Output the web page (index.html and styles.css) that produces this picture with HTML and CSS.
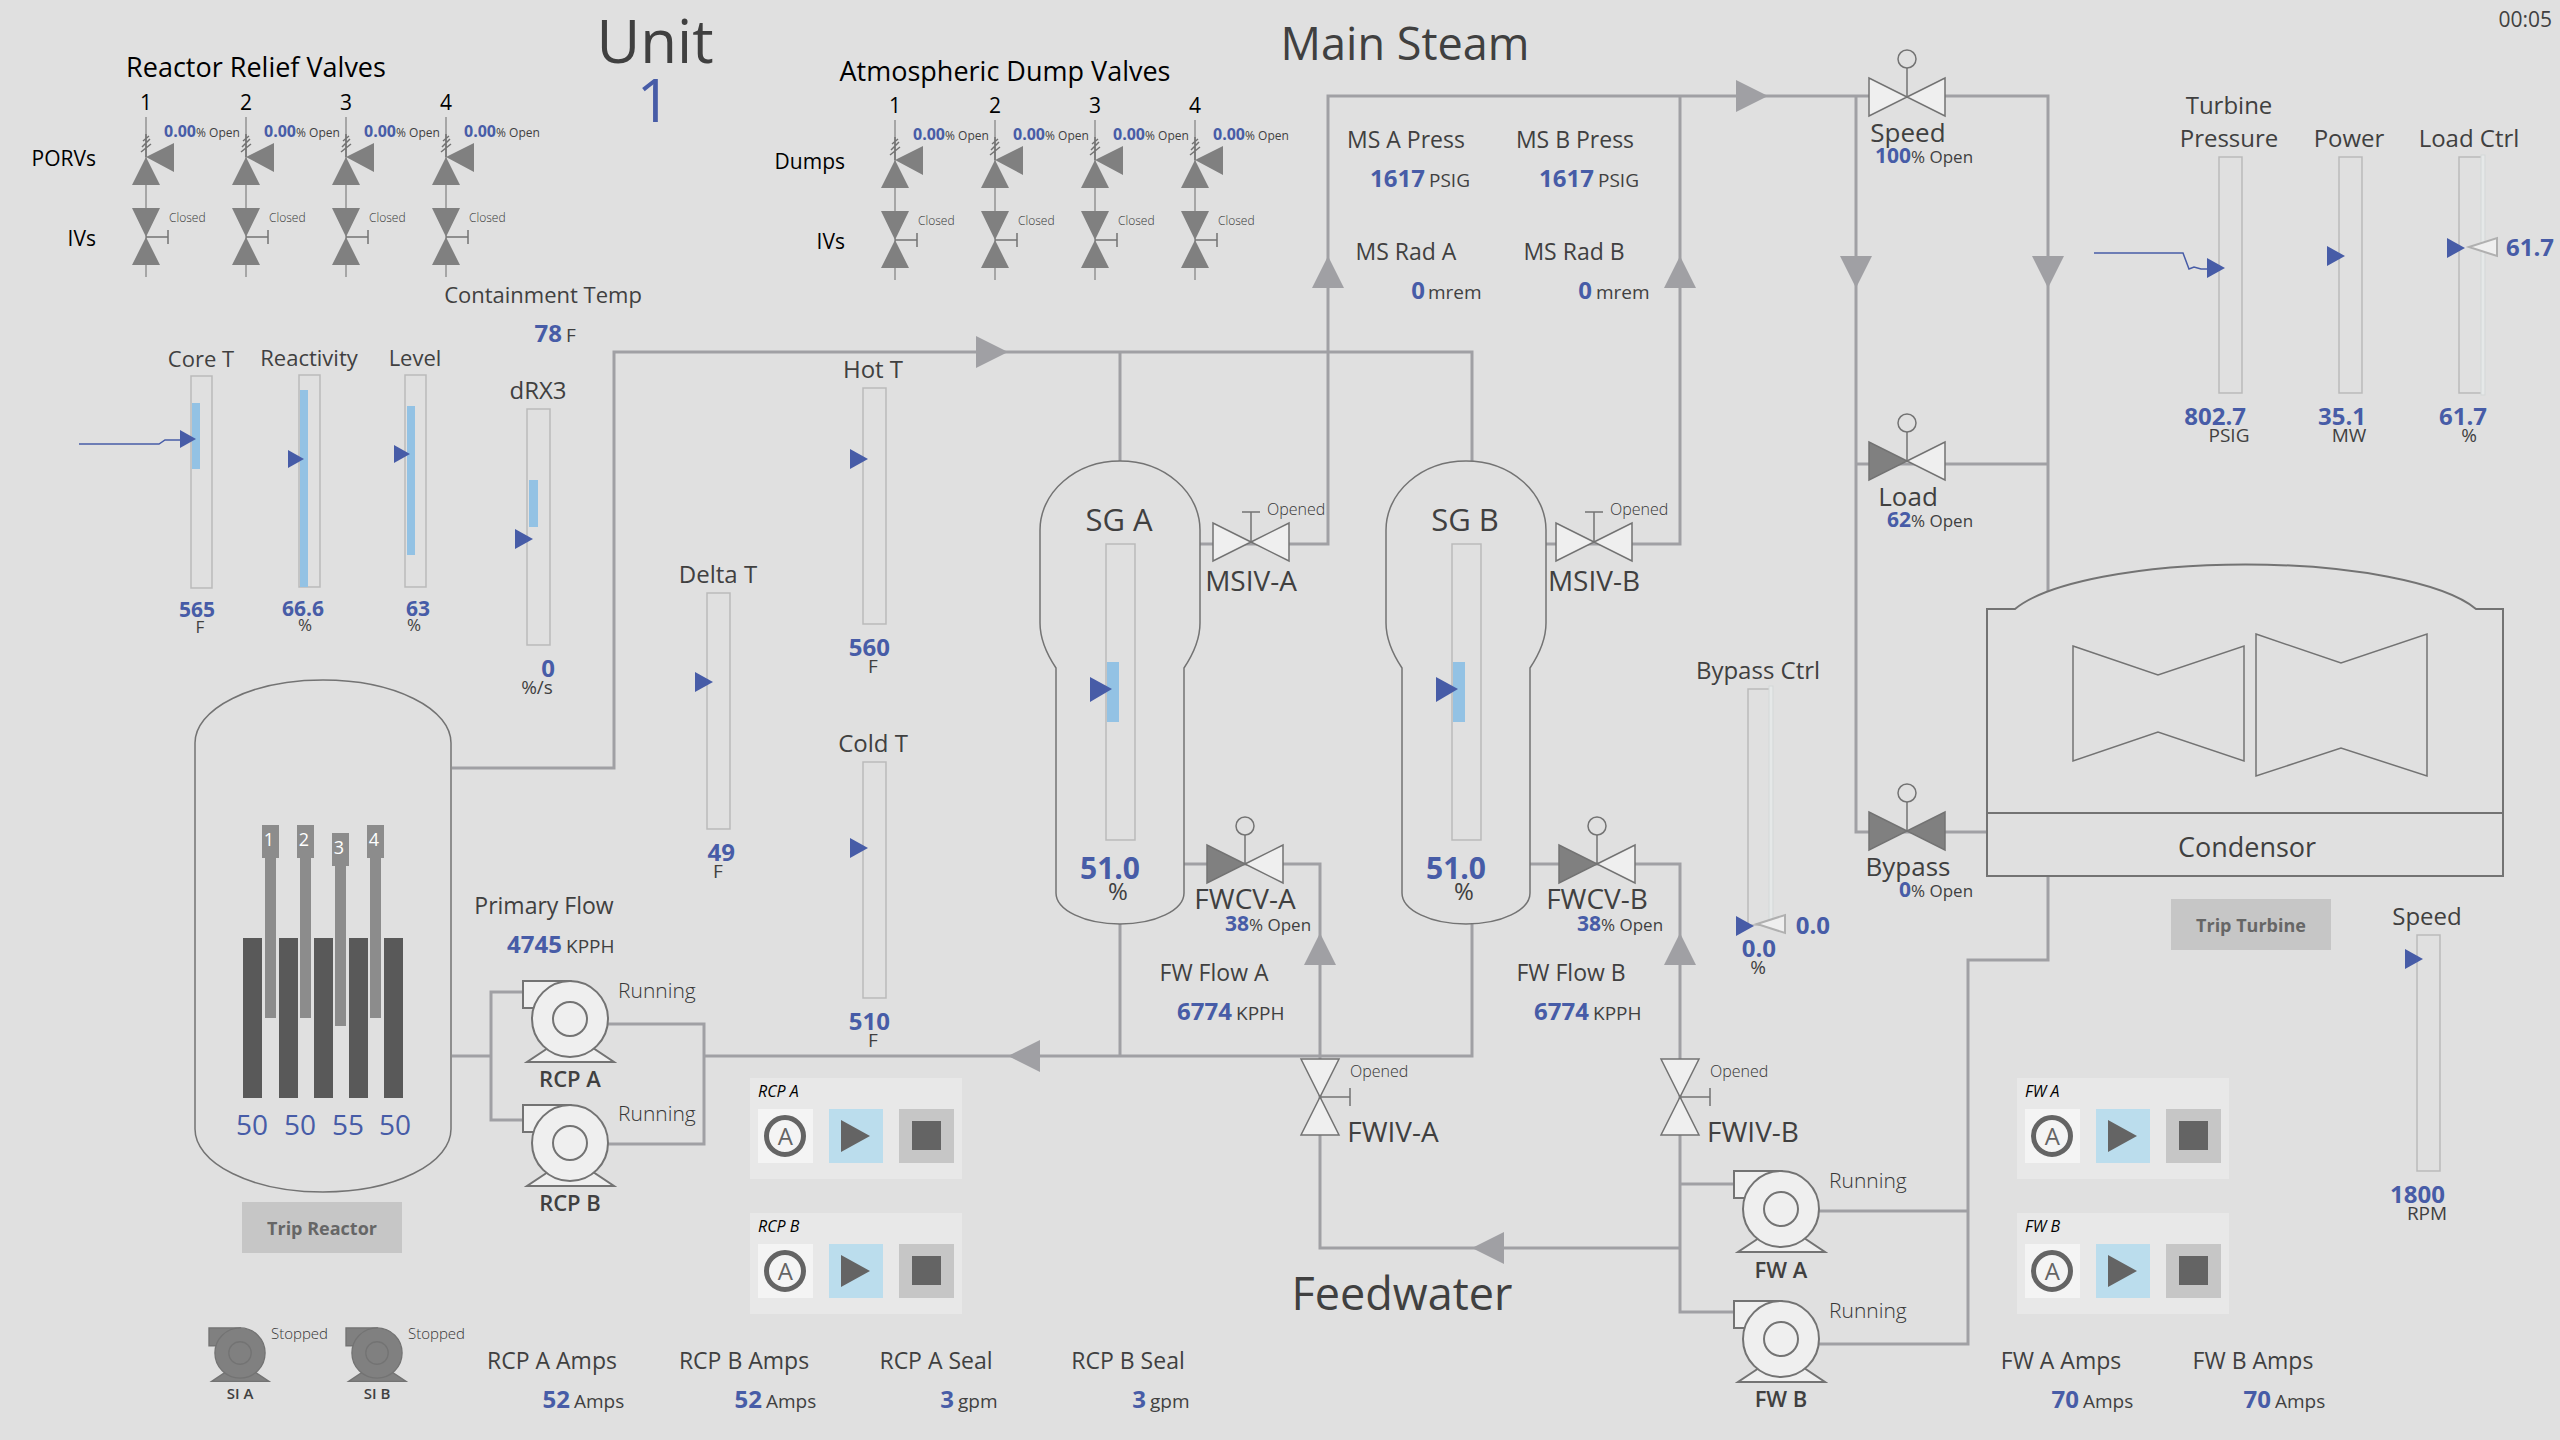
FILE: index.html
```html
<!DOCTYPE html>
<html lang="en">
<head>
<meta charset="utf-8">
<meta name="viewport" content="width=device-width, initial-scale=1">
<title>Unit 1 Overview</title>
<link rel="stylesheet" href="styles.css">
</head>
<body>
<main class="overview">
<svg class="mimic" viewBox="0 0 2560 1440" role="group" aria-label="Unit 1 plant mimic">
  <defs>
    <g id="pointer"><path d="M-12 -10 L6 0 L-12 10 Z"/></g>
    <g id="pointer-small"><path d="M-11 -9 L5 0 L-11 9 Z"/></g>
    <g id="setpoint"><path d="M1 0 L29 -9 V9 Z"/></g>
    <g id="arrow-right"><path d="M-16 -16 L16 0 L-16 16 Z"/></g>
    <g id="hand-stem"><path d="M0 0 V-30 M-9 -30 H9"/></g>
    <g id="control-stem"><path d="M0 0 V-29"/><circle cy="-38" r="9"/></g>
    <g id="relief-train">
      <path class="thin-pipe" d="M0 117 V277"/>
      <path class="spring" d="M0 134 V157 M-3 141 L3 136 M-4 147 L4 139 M-5 152 L5 144"/>
      <path class="shut" d="M0 157 L28 143 V172 Z M0 157 L-14 185 H14 Z"/>
      <path class="shut" d="M0 237 L-14 208 H14 Z M0 237 L-14 265 H14 Z"/>
      <path class="spring" d="M0 237 H22 M22 230 V244"/>
    </g>
    <g id="pump">
      <path d="M-22 29 L-43 43 H44 L23 29 Z"/>
      <path d="M0 -38 H-47 V-11 H-20 Z"/>
      <circle r="38"/>
      <circle r="17"/>
    </g>
    <g id="steam-generator">
      <path d="M1056 668 C1046 653 1040 638 1040 623 V530 A80 69 0 0 1 1200 530 V623 C1200 638 1194 653 1184 668 V893 A64 31 0 0 1 1056 893 Z"/>
    </g>
    <g id="rod"><path d="M262 825 H279 V858 H276 V1018 H265 V858 H262 Z"/></g>
  </defs>

  <!-- Process piping -->
  <g class="pipe">
    <path d="M452 768 H614 V352 H1472 V462"/>
    <path d="M1120 352 V462"/>
    <path d="M1200 544 H1328 V96 H1870"/>
    <path d="M1546 544 H1680 V96"/>
    <path d="M1945 96 H2048 V592"/>
    <path d="M1856 96 V832 H1987"/>
    <path d="M1856 464 H2048"/>
    <path d="M1184 864 H1320 V1248 H1680"/>
    <path d="M1530 864 H1680 V1312 H1734"/>
    <path d="M1680 1184 H1734"/>
    <path d="M1120 924 V1056 M1472 924 V1056 H704"/>
    <path d="M452 1056 H491 M522 992 H491 V1120 H522"/>
    <path d="M607 1024 H704 V1144 H607"/>
    <path d="M1818 1211 H1968 M1818 1344 H1968 V960 H2048 V876"/>
  </g>
  <g class="flow">
    <use href="#arrow-right" transform="translate(992 352)"/>
    <use href="#arrow-right" transform="translate(1752 96)"/>
    <use href="#arrow-right" transform="translate(1328 272) rotate(-90)"/>
    <use href="#arrow-right" transform="translate(1680 272) rotate(-90)"/>
    <use href="#arrow-right" transform="translate(1856 272) rotate(90)"/>
    <use href="#arrow-right" transform="translate(2048 272) rotate(90)"/>
    <use href="#arrow-right" transform="translate(1320 949) rotate(-90)"/>
    <use href="#arrow-right" transform="translate(1680 949) rotate(-90)"/>
    <use href="#arrow-right" transform="translate(1024 1056) rotate(180)"/>
    <use href="#arrow-right" transform="translate(1488 1248) rotate(180)"/>
  </g>

  <!-- Headings -->
  <text class="unit-title middle" x="655" y="63">Unit</text>
  <text class="unit-title accent middle" x="654" y="122">1</text>
  <text class="section middle" x="1405" y="60">Main Steam</text>
  <text class="section middle" x="1402" y="1310">Feedwater</text>
  <text class="clock end" x="2552" y="27">00:05</text>

  <!-- Reactor relief valves -->
  <g class="valve-bank">
    <text class="bank-title middle" x="256" y="77">Reactor Relief Valves</text>
    <text class="bank-label end" x="96" y="166">PORVs</text>
    <text class="bank-label end" x="96" y="246">IVs</text>
    <g transform="translate(146 0)">
      <use href="#relief-train"/>
      <text class="bank-label middle" y="110">1</text>
      <text class="opening-small" x="18" y="137"><tspan class="num">0.00</tspan>% Open</text>
      <text class="state-small" x="23" y="222">Closed</text>
    </g>
    <g transform="translate(246 0)">
      <use href="#relief-train"/>
      <text class="bank-label middle" y="110">2</text>
      <text class="opening-small" x="18" y="137"><tspan class="num">0.00</tspan>% Open</text>
      <text class="state-small" x="23" y="222">Closed</text>
    </g>
    <g transform="translate(346 0)">
      <use href="#relief-train"/>
      <text class="bank-label middle" y="110">3</text>
      <text class="opening-small" x="18" y="137"><tspan class="num">0.00</tspan>% Open</text>
      <text class="state-small" x="23" y="222">Closed</text>
    </g>
    <g transform="translate(446 0)">
      <use href="#relief-train"/>
      <text class="bank-label middle" y="110">4</text>
      <text class="opening-small" x="18" y="137"><tspan class="num">0.00</tspan>% Open</text>
      <text class="state-small" x="23" y="222">Closed</text>
    </g>
  </g>

  <!-- Atmospheric dump valves -->
  <g class="valve-bank" transform="translate(749 3)">
    <text class="bank-title middle" x="256" y="78">Atmospheric Dump Valves</text>
    <text class="bank-label end" x="96" y="166">Dumps</text>
    <text class="bank-label end" x="96" y="246">IVs</text>
    <g transform="translate(146 0)">
      <use href="#relief-train"/>
      <text class="bank-label middle" y="110">1</text>
      <text class="opening-small" x="18" y="137"><tspan class="num">0.00</tspan>% Open</text>
      <text class="state-small" x="23" y="222">Closed</text>
    </g>
    <g transform="translate(246 0)">
      <use href="#relief-train"/>
      <text class="bank-label middle" y="110">2</text>
      <text class="opening-small" x="18" y="137"><tspan class="num">0.00</tspan>% Open</text>
      <text class="state-small" x="23" y="222">Closed</text>
    </g>
    <g transform="translate(346 0)">
      <use href="#relief-train"/>
      <text class="bank-label middle" y="110">3</text>
      <text class="opening-small" x="18" y="137"><tspan class="num">0.00</tspan>% Open</text>
      <text class="state-small" x="23" y="222">Closed</text>
    </g>
    <g transform="translate(446 0)">
      <use href="#relief-train"/>
      <text class="bank-label middle" y="110">4</text>
      <text class="opening-small" x="18" y="137"><tspan class="num">0.00</tspan>% Open</text>
      <text class="state-small" x="23" y="222">Closed</text>
    </g>
  </g>

  <!-- Readouts: name centred on the origin, value and unit below -->
  <g class="readout long" transform="translate(543 303)"><text class="name">Containment Temp</text><text class="value" x="19" y="39">78</text><text class="uom" x="23" y="39">F</text></g>
  <g class="readout" transform="translate(1406 148)"><text class="name">MS A Press</text><text class="value" x="19" y="39">1617</text><text class="uom" x="23" y="39">PSIG</text></g>
  <g class="readout" transform="translate(1575 148)"><text class="name">MS B Press</text><text class="value" x="19" y="39">1617</text><text class="uom" x="23" y="39">PSIG</text></g>
  <g class="readout" transform="translate(1406 260)"><text class="name">MS Rad A</text><text class="value" x="19" y="39">0</text><text class="uom" x="22" y="39">mrem</text></g>
  <g class="readout" transform="translate(1574 260)"><text class="name">MS Rad B</text><text class="value" x="18" y="39">0</text><text class="uom" x="22" y="39">mrem</text></g>
  <g class="readout" transform="translate(544 914)"><text class="name">Primary Flow</text><text class="value" x="18" y="39">4745</text><text class="uom" x="22" y="39">KPPH</text></g>
  <g class="readout" transform="translate(1214 981)"><text class="name">FW Flow A</text><text class="value" x="18" y="39">6774</text><text class="uom" x="22" y="39">KPPH</text></g>
  <g class="readout" transform="translate(1571 981)"><text class="name">FW Flow B</text><text class="value" x="18" y="39">6774</text><text class="uom" x="22" y="39">KPPH</text></g>
  <g class="readout" transform="translate(552 1369)"><text class="name">RCP A Amps</text><text class="value" x="18" y="39">52</text><text class="uom" x="22" y="39">Amps</text></g>
  <g class="readout" transform="translate(744 1369)"><text class="name">RCP B Amps</text><text class="value" x="18" y="39">52</text><text class="uom" x="22" y="39">Amps</text></g>
  <g class="readout" transform="translate(936 1369)"><text class="name">RCP A Seal</text><text class="value" x="18" y="39">3</text><text class="uom" x="22" y="39">gpm</text></g>
  <g class="readout" transform="translate(1128 1369)"><text class="name">RCP B Seal</text><text class="value" x="18" y="39">3</text><text class="uom" x="22" y="39">gpm</text></g>
  <g class="readout" transform="translate(2061 1369)"><text class="name">FW A Amps</text><text class="value" x="18" y="39">70</text><text class="uom" x="22" y="39">Amps</text></g>
  <g class="readout" transform="translate(2253 1369)"><text class="name">FW B Amps</text><text class="value" x="18" y="39">70</text><text class="uom" x="22" y="39">Amps</text></g>

  <!-- Reactor gauges -->
  <g class="gauge compact" transform="translate(191 376)">
    <text class="name" x="10" y="-9">Core T</text>
    <rect class="track" width="21" height="212"/>
    <rect class="band" x="1" y="27" width="8" height="66"/>
    <path class="trend" d="M-112 68 H-32 L-26 64 H-11"/>
    <use class="pointer" href="#pointer-small" y="63"/>
    <text class="value" x="24" y="241">565</text>
    <text class="uom" x="9" y="257">F</text>
  </g>
  <g class="gauge compact" transform="translate(299 375)">
    <text class="name" x="10" y="-9">Reactivity</text>
    <rect class="track" width="21" height="212"/>
    <rect class="band" x="1" y="15" width="8" height="197"/>
    <use class="pointer" href="#pointer-small" y="84"/>
    <text class="value" x="25" y="241">66.6</text>
    <text class="uom" x="6" y="256">%</text>
  </g>
  <g class="gauge compact" transform="translate(405 375)">
    <text class="name" x="10" y="-9">Level</text>
    <rect class="track" width="21" height="212"/>
    <rect class="band" x="2" y="31" width="8" height="149"/>
    <use class="pointer" href="#pointer-small" y="79"/>
    <text class="value" x="25" y="241">63</text>
    <text class="uom" x="9" y="256">%</text>
  </g>
  <g class="gauge" transform="translate(527 409)">
    <text class="name" x="11" y="-10">dRX3</text>
    <rect class="track" width="23" height="236"/>
    <rect class="band" x="2" y="71" width="9" height="47"/>
    <use class="pointer" href="#pointer" y="130"/>
    <text class="value" x="28" y="268">0</text>
    <text class="uom" x="10" y="285">%/s</text>
  </g>
  <g class="gauge" transform="translate(863 388)">
    <text class="name" x="10" y="-10">Hot T</text>
    <rect class="track" width="23" height="236"/>
    <use class="pointer" href="#pointer" x="-1" y="71"/>
    <text class="value" x="27" y="268">560</text>
    <text class="uom" x="10" y="285">F</text>
  </g>
  <g class="gauge" transform="translate(707 593)">
    <text class="name" x="11" y="-10">Delta T</text>
    <rect class="track" width="23" height="236"/>
    <use class="pointer" href="#pointer" y="89"/>
    <text class="value" x="28" y="268">49</text>
    <text class="uom" x="11" y="285">F</text>
  </g>
  <g class="gauge" transform="translate(863 762)">
    <text class="name" x="10" y="-10">Cold T</text>
    <rect class="track" width="23" height="236"/>
    <use class="pointer" href="#pointer" x="-1" y="86"/>
    <text class="value" x="27" y="268">510</text>
    <text class="uom" x="10" y="285">F</text>
  </g>

  <!-- Turbine gauges -->
  <g class="gauge" transform="translate(2219 157)">
    <text class="name" x="10" y="-43">Turbine</text>
    <text class="name" x="10" y="-10">Pressure</text>
    <rect class="track" width="23" height="236"/>
    <path class="trend" d="M-125 96 H-36 L-30 112 L-25 110 L-18 112 H-12"/>
    <use class="pointer" href="#pointer" y="111"/>
    <text class="value" x="27" y="268">802.7</text>
    <text class="uom" x="10" y="285">PSIG</text>
  </g>
  <g class="gauge" transform="translate(2339 157)">
    <text class="name" x="10" y="-10">Power</text>
    <rect class="track" width="23" height="236"/>
    <use class="pointer" href="#pointer" y="99"/>
    <text class="value" x="27" y="268">35.1</text>
    <text class="uom" x="10" y="285">MW</text>
  </g>
  <g class="gauge" transform="translate(2459 157)">
    <text class="name" x="10" y="-10">Load Ctrl</text>
    <rect class="track" width="23" height="236"/>
    <rect class="slider" x="22" y="-2" width="4" height="240"/>
    <use class="pointer" href="#pointer" y="91"/>
    <use class="setpoint" href="#setpoint" x="9" y="90"/>
    <text class="value" x="95" y="99">61.7</text>
    <text class="value" x="28" y="268">61.7</text>
    <text class="uom" x="10" y="285">%</text>
  </g>
  <g class="gauge" transform="translate(1748 689)">
    <text class="name" x="10" y="-10">Bypass Ctrl</text>
    <rect class="track" width="23" height="236"/>
    <rect class="slider" x="21" y="-3" width="4" height="238"/>
    <use class="pointer" href="#pointer" y="237"/>
    <use class="setpoint" href="#setpoint" x="8" y="235"/>
    <text class="value" x="82" y="245">0.0</text>
    <text class="value" x="28" y="268">0.0</text>
    <text class="uom" x="10" y="285">%</text>
  </g>
  <g class="gauge" transform="translate(2417 935)">
    <text class="name" x="10" y="-10">Speed</text>
    <rect class="track" width="23" height="236"/>
    <use class="pointer" href="#pointer" y="24"/>
    <text class="value" x="28" y="268">1800</text>
    <text class="uom" x="10" y="285">RPM</text>
  </g>

  <!-- Reactor vessel -->
  <g class="reactor">
    <path class="vessel" d="M195 743 A128 63 0 0 1 451 743 V1129 A128 63 0 0 1 195 1129 Z"/>
    <g class="fuel">
      <rect x="243" y="938" width="19" height="160"/>
      <rect x="279" y="938" width="19" height="160"/>
      <rect x="314" y="938" width="19" height="160"/>
      <rect x="349" y="938" width="19" height="160"/>
      <rect x="384" y="938" width="19" height="160"/>
    </g>
    <g class="rods">
      <use href="#rod"/>
      <use href="#rod" x="35"/>
      <use href="#rod" x="70" y="8"/>
      <use href="#rod" x="105"/>
    </g>
    <g class="rod-number">
      <text x="269" y="846">1</text>
      <text x="304" y="846">2</text>
      <text x="339" y="854">3</text>
      <text x="374" y="846">4</text>
    </g>
    <g class="rod-height">
      <text x="252" y="1135">50</text>
      <text x="300" y="1135">50</text>
      <text x="348" y="1135">55</text>
      <text x="395" y="1135">50</text>
    </g>
  </g>

  <!-- Steam generators -->
  <g class="sg">
    <use class="vessel" href="#steam-generator"/>
    <text class="sg-name" x="1119" y="531">SG A</text>
    <rect class="track" x="1106" y="544" width="29" height="296"/>
    <rect class="band" x="1107" y="662" width="12" height="60"/>
    <path class="pointer" d="M1090 677 L1112 689 L1090 702 Z"/>
    <text class="sg-value" x="1140" y="879">51.0</text>
    <text class="sg-uom" x="1118" y="900">%</text>
  </g>
  <g class="sg" transform="translate(346 0)">
    <use class="vessel" href="#steam-generator"/>
    <text class="sg-name" x="1119" y="531">SG B</text>
    <rect class="track" x="1106" y="544" width="29" height="296"/>
    <rect class="band" x="1107" y="662" width="12" height="60"/>
    <path class="pointer" d="M1090 677 L1112 689 L1090 702 Z"/>
    <text class="sg-value" x="1140" y="879">51.0</text>
    <text class="sg-uom" x="1118" y="900">%</text>
  </g>

  <!-- Isolation valves -->
  <g class="valve" transform="translate(1251 542)">
    <path class="open" d="M0 0 L-38 -19 V19 Z M0 0 L38 -19 V19 Z"/>
    <use class="stem" href="#hand-stem"/>
    <text class="state" x="16" y="-27">Opened</text>
    <text class="tag" y="49">MSIV-A</text>
  </g>
  <g class="valve" transform="translate(1594 542)">
    <path class="open" d="M0 0 L-38 -19 V19 Z M0 0 L38 -19 V19 Z"/>
    <use class="stem" href="#hand-stem"/>
    <text class="state" x="16" y="-27">Opened</text>
    <text class="tag" y="49">MSIV-B</text>
  </g>
  <g class="valve" transform="translate(1320 1097)">
    <path class="open" d="M0 0 L-19 -38 H19 Z M0 0 L-19 38 H19 Z"/>
    <use class="stem" href="#hand-stem" transform="rotate(90)"/>
    <text class="state" x="30" y="-20">Opened</text>
    <text class="tag" x="73" y="45">FWIV-A</text>
  </g>
  <g class="valve" transform="translate(1680 1097)">
    <path class="open" d="M0 0 L-19 -38 H19 Z M0 0 L-19 38 H19 Z"/>
    <use class="stem" href="#hand-stem" transform="rotate(90)"/>
    <text class="state" x="30" y="-20">Opened</text>
    <text class="tag" x="73" y="45">FWIV-B</text>
  </g>

  <!-- Control valves -->
  <g class="valve" transform="translate(1245 864)">
    <path class="closed" d="M0 0 L-38 -19 V19 Z"/>
    <path class="open" d="M0 0 L38 -19 V19 Z"/>
    <use class="stem" href="#control-stem"/>
    <text class="tag" y="45">FWCV-A</text>
    <text class="opening-value" x="4" y="67">38</text><text class="opening" x="4" y="67">% Open</text>
  </g>
  <g class="valve" transform="translate(1597 864)">
    <path class="closed" d="M0 0 L-38 -19 V19 Z"/>
    <path class="open" d="M0 0 L38 -19 V19 Z"/>
    <use class="stem" href="#control-stem"/>
    <text class="tag" y="45">FWCV-B</text>
    <text class="opening-value" x="4" y="67">38</text><text class="opening" x="4" y="67">% Open</text>
  </g>
  <g class="valve steam-valve" transform="translate(1907 97)">
    <path class="open" d="M0 0 L-38 -19 V19 Z M0 0 L38 -19 V19 Z"/>
    <use class="stem" href="#control-stem"/>
    <text class="tag" x="1" y="45">Speed</text>
    <text class="opening-value" x="4" y="66">100</text><text class="opening" x="4" y="66">% Open</text>
  </g>
  <g class="valve steam-valve" transform="translate(1907 461)">
    <path class="closed" d="M0 0 L-38 -19 V19 Z"/>
    <path class="open" d="M0 0 L38 -19 V19 Z"/>
    <use class="stem" href="#control-stem"/>
    <text class="tag" x="1" y="45">Load</text>
    <text class="opening-value" x="4" y="66">62</text><text class="opening" x="4" y="66">% Open</text>
  </g>
  <g class="valve steam-valve" transform="translate(1907 831)">
    <path class="closed" d="M0 0 L-38 -19 V19 Z M0 0 L38 -19 V19 Z"/>
    <use class="stem" href="#control-stem"/>
    <text class="tag" x="1" y="45">Bypass</text>
    <text class="opening-value" x="4" y="66">0</text><text class="opening" x="4" y="66">% Open</text>
  </g>

  <!-- Turbine and condenser -->
  <g class="vessel heavy">
    <path d="M1987 609 H2015 A242 64 0 0 1 2476 609 H2503 V876 H1987 Z M1987 813 H2503"/>
    <path class="rotor" d="M2073 646 L2158 675 L2244 646 V761 L2158 732 L2073 761 Z"/>
    <path class="rotor" d="M2256 634 L2341 663 L2427 634 V776 L2341 748 L2256 776 Z"/>
  </g>
  <text class="condenser-name" x="2247" y="857">Condensor</text>

  <!-- Pumps -->
  <g class="pump" transform="translate(570 1019)">
    <use href="#pump"/>
    <text class="pump-state" x="48" y="-21">Running</text>
    <text class="pump-name" y="68">RCP A</text>
  </g>
  <g class="pump" transform="translate(570 1143)">
    <use href="#pump"/>
    <text class="pump-state" x="48" y="-22">Running</text>
    <text class="pump-name" y="68">RCP B</text>
  </g>
  <g class="pump" transform="translate(1781 1209)">
    <use href="#pump"/>
    <text class="pump-state" x="48" y="-21">Running</text>
    <text class="pump-name" y="69">FW A</text>
  </g>
  <g class="pump" transform="translate(1781 1339)">
    <use href="#pump"/>
    <text class="pump-state" x="48" y="-21">Running</text>
    <text class="pump-name" y="68">FW B</text>
  </g>
  <g class="pump stopped" transform="translate(240 1353)">
    <use href="#pump" transform="scale(0.66)"/>
    <text class="pump-state" x="31" y="-14">Stopped</text>
    <text class="pump-name" y="46">SI A</text>
  </g>
  <g class="pump stopped" transform="translate(377 1353)">
    <use href="#pump" transform="scale(0.66)"/>
    <text class="pump-state" x="31" y="-14">Stopped</text>
    <text class="pump-name" y="46">SI B</text>
  </g>

  <!-- Operator controls -->
  <foreignObject x="242" y="1202" width="160" height="51">
    <button class="trip" type="button">Trip Reactor</button>
  </foreignObject>
  <foreignObject x="2171" y="899" width="160" height="51">
    <button class="trip" type="button">Trip Turbine</button>
  </foreignObject>
  <foreignObject x="750" y="1078" width="212" height="101">
    <section class="panel" aria-label="RCP A control">
      <h2 class="panel-title">RCP A</h2>
      <div class="panel-keys">
        <button class="key auto" type="button" aria-label="RCP A auto"><span class="ring">A</span></button>
        <button class="key run" type="button" aria-label="RCP A start"><svg class="glyph" viewBox="0 0 32 32"><path d="M1 0 L30 16 L1 32 Z"/></svg></button>
        <button class="key stop" type="button" aria-label="RCP A stop"><svg class="glyph" viewBox="0 0 32 32"><path d="M1 1 H30 V30 H1 Z"/></svg></button>
      </div>
    </section>
  </foreignObject>
  <foreignObject x="750" y="1213" width="212" height="101">
    <section class="panel" aria-label="RCP B control">
      <h2 class="panel-title">RCP B</h2>
      <div class="panel-keys">
        <button class="key auto" type="button" aria-label="RCP B auto"><span class="ring">A</span></button>
        <button class="key run" type="button" aria-label="RCP B start"><svg class="glyph" viewBox="0 0 32 32"><path d="M1 0 L30 16 L1 32 Z"/></svg></button>
        <button class="key stop" type="button" aria-label="RCP B stop"><svg class="glyph" viewBox="0 0 32 32"><path d="M1 1 H30 V30 H1 Z"/></svg></button>
      </div>
    </section>
  </foreignObject>
  <foreignObject x="2017" y="1078" width="212" height="101">
    <section class="panel" aria-label="FW A control">
      <h2 class="panel-title">FW A</h2>
      <div class="panel-keys">
        <button class="key auto" type="button" aria-label="FW A auto"><span class="ring">A</span></button>
        <button class="key run" type="button" aria-label="FW A start"><svg class="glyph" viewBox="0 0 32 32"><path d="M1 0 L30 16 L1 32 Z"/></svg></button>
        <button class="key stop" type="button" aria-label="FW A stop"><svg class="glyph" viewBox="0 0 32 32"><path d="M1 1 H30 V30 H1 Z"/></svg></button>
      </div>
    </section>
  </foreignObject>
  <foreignObject x="2017" y="1213" width="212" height="101">
    <section class="panel" aria-label="FW B control">
      <h2 class="panel-title">FW B</h2>
      <div class="panel-keys">
        <button class="key auto" type="button" aria-label="FW B auto"><span class="ring">A</span></button>
        <button class="key run" type="button" aria-label="FW B start"><svg class="glyph" viewBox="0 0 32 32"><path d="M1 0 L30 16 L1 32 Z"/></svg></button>
        <button class="key stop" type="button" aria-label="FW B stop"><svg class="glyph" viewBox="0 0 32 32"><path d="M1 1 H30 V30 H1 Z"/></svg></button>
      </div>
    </section>
  </foreignObject>
</svg>
</main>
</body>
</html>
```

FILE: styles.css
```css
:root {
  --background: #e0e0e0;
  --ink: #404040;
  --light-ink: #363636;
  --accent: #475ca7;
  --pipe: #a0a0a4;
  --outline: #737373;
  --shut: #808080;
  --open: #efefef;
  --band: #93c2e4;
}

* {
  box-sizing: border-box;
}

body {
  margin: 0;
  background: var(--background);
  color: var(--ink);
  font-family: "Open Sans", "Noto Sans", sans-serif;
}

.mimic {
  display: block;
  width: 100%;
  height: auto;
  fill: var(--ink);
}

.middle { text-anchor: middle; }
.end { text-anchor: end; }

/* Piping */
.pipe {
  fill: none;
  stroke: var(--pipe);
  stroke-width: 3;
}

.flow { fill: var(--pipe); }

.thin-pipe {
  stroke: #a6a6a6;
  stroke-width: 2;
}

/* Headings */
.unit-title { font-size: 60px; }
.accent { fill: var(--accent); }
.section { font-size: 45px; }
.clock { font-size: 21px; }

/* Valve banks */
.valve-bank { fill: #000; }
.bank-title { font-size: 27px; }
.bank-label { font-size: 21px; }

.opening-small {
  fill: var(--ink);
  font-size: 12px;
}

.opening-small .num {
  fill: var(--accent);
  font-size: 16px;
  font-weight: 700;
}

.state-small {
  fill: var(--light-ink);
  font-size: 12px;
  font-weight: 300;
}

.spring {
  fill: none;
  stroke: var(--outline);
  stroke-width: 1.5;
}

.shut {
  fill: var(--shut);
}

/* Readouts and gauges */
.readout .name,
.gauge .name {
  text-anchor: middle;
}

.readout .name { font-size: 23px; }
.readout.long .name { font-size: 22px; }
.gauge .name { font-size: 24px; }
.compact .name { font-size: 22px; }

.value {
  fill: var(--accent);
  font-size: 24px;
  font-weight: 700;
  text-anchor: end;
}

.compact .value { font-size: 21px; }
.uom { font-size: 19px; }
.gauge .uom { text-anchor: middle; }
.compact .uom { font-size: 17px; }

.track {
  fill: none;
  stroke: #bababa;
  stroke-width: 1.5;
}

.band { fill: var(--band); }
.pointer { fill: var(--accent); }

.trend {
  fill: none;
  stroke: var(--accent);
  stroke-width: 1.5;
}

.slider {
  fill: #e5e8e8;
  stroke: #d3d7d7;
}

.setpoint {
  fill: var(--open);
  stroke: #b0b0b0;
  stroke-width: 2;
}

/* Vessels */
.vessel {
  fill: var(--background);
  stroke: var(--outline);
  stroke-width: 1.5;
}

.vessel.heavy { stroke-width: 2; }
.rotor { stroke-width: 1.5; }
.fuel { fill: #595959; }
.rods { fill: #8c8c8c; }

.rod-number {
  fill: #fff;
  font-size: 18px;
  text-anchor: middle;
}

.rod-height {
  fill: var(--accent);
  font-size: 28px;
  font-weight: 500;
  text-anchor: middle;
}

.sg-name {
  font-size: 31px;
  text-anchor: middle;
}

.sg-value {
  fill: var(--accent);
  font-size: 30px;
  font-weight: 700;
  text-anchor: end;
}

.sg-uom {
  font-size: 24px;
  text-anchor: middle;
}

.condenser-name {
  font-size: 27px;
  text-anchor: middle;
}

/* Valves */
.open {
  fill: var(--open);
  stroke: var(--outline);
  stroke-width: 1.5;
}

.closed {
  fill: var(--shut);
  stroke: var(--outline);
  stroke-width: 1.5;
}

.stem {
  fill: none;
  stroke: var(--outline);
  stroke-width: 1.5;
}

.tag {
  font-size: 28px;
  text-anchor: middle;
}

.steam-valve .tag { font-size: 26px; }

.state {
  fill: var(--light-ink);
  font-size: 16px;
  font-weight: 300;
}

.opening { font-size: 17px; }

.opening-value {
  fill: var(--accent);
  font-size: 21px;
  font-weight: 700;
  text-anchor: end;
}

/* Pumps */
.pump use {
  fill: var(--open);
  stroke: var(--outline);
  stroke-width: 2;
}

.pump.stopped use { fill: var(--shut); }

.pump-state {
  fill: var(--light-ink);
  font-size: 21px;
  font-weight: 300;
}

.pump-name {
  font-size: 22px;
  font-weight: 600;
  text-anchor: middle;
}

.stopped .pump-state { font-size: 15px; }
.stopped .pump-name { font-size: 15px; }

/* Operator controls */
button {
  border: 0;
  font-family: inherit;
  cursor: pointer;
}

.trip {
  width: 100%;
  height: 100%;
  background: #c6c6c6;
  color: #666;
  font-size: 18px;
  font-weight: 700;
}

.panel {
  height: 100%;
  padding: 3px 8px 16px;
  background: #e8e8e8;
}

.panel-title {
  margin: 0 0 8px;
  color: #000;
  font-size: 16px;
  font-style: italic;
  font-weight: 400;
  line-height: 20px;
}

.panel-keys {
  display: grid;
  grid-template-columns: repeat(3, 1fr);
  gap: 16px;
}

.key {
  display: flex;
  align-items: center;
  justify-content: center;
  height: 54px;
  padding: 0;
}

.auto { background: #f4f4f4; }
.run { background: #bbdded; }
.stop { background: #c6c6c6; }

.ring {
  width: 42px;
  height: 42px;
  border: 5px solid #646464;
  border-radius: 50%;
  color: #646464;
  font-size: 24px;
  line-height: 32px;
}

.glyph {
  width: 32px;
  height: 32px;
  fill: #646464;
}
```
